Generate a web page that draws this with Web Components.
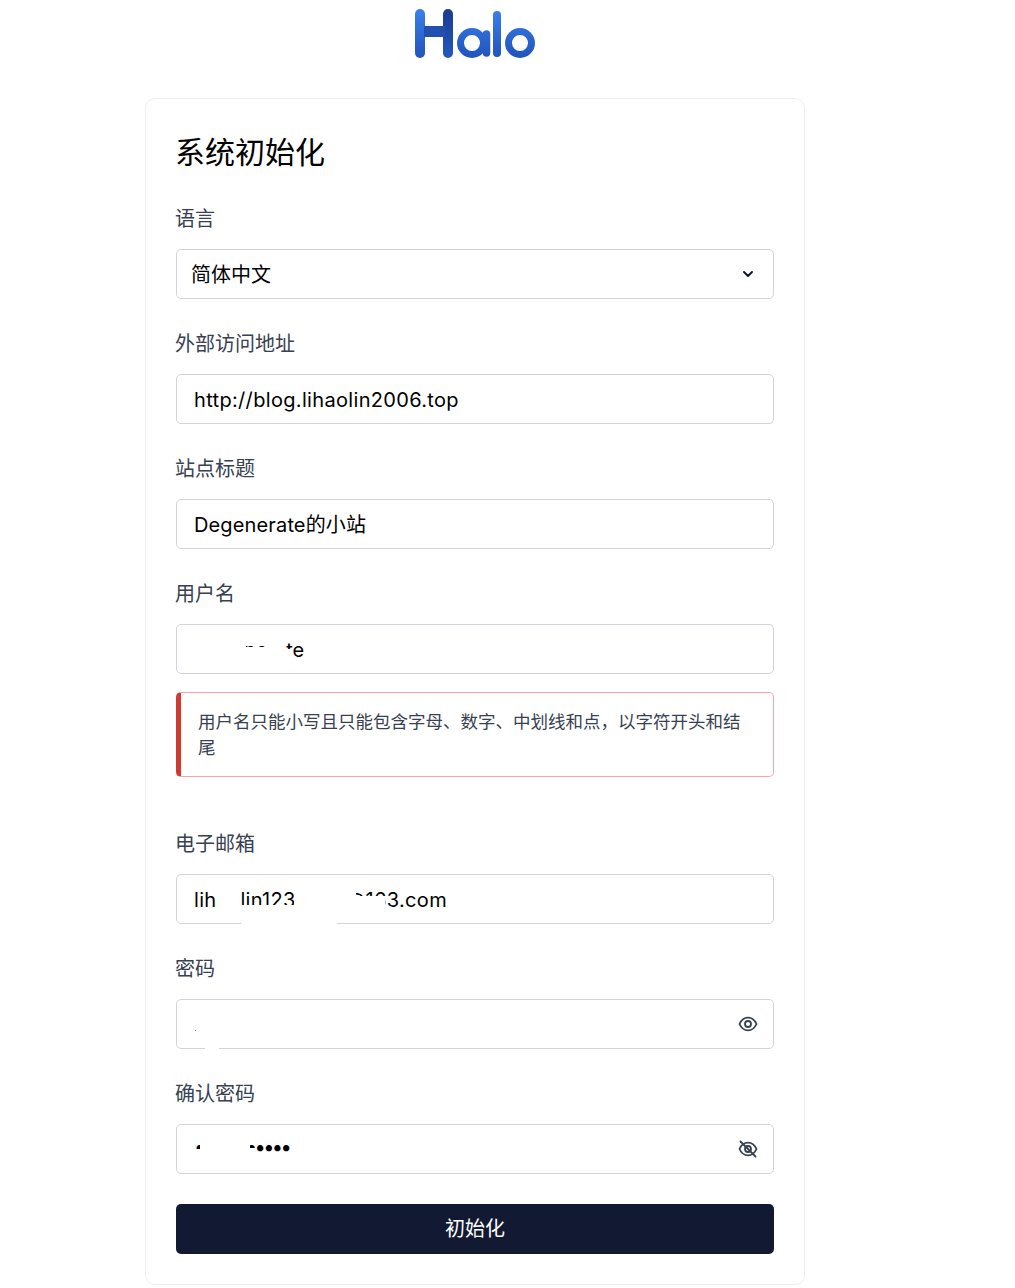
<!DOCTYPE html>
<html lang="zh"><head><meta charset="utf-8"><title>Halo</title>
<style>
html,body{margin:0;background:#fff}
body{font-family:Inter,"Noto Sans CJK SC",sans-serif;height:1288px;overflow:hidden}
</style></head><body>
<setup-page>
  <halo-logo slot="logo"></halo-logo>
  <setup-card heading="系统初始化">
    <form-field label="语言" value="简体中文" pad="14"><chevron-icon slot="suffix"></chevron-icon></form-field>
    <form-field label="外部访问地址" value="http://blog.lihaolin2006.top" spacing="0.33"></form-field>
    <form-field label="站点标题" value="Degenerate的小站" spacing="0.14"></form-field>
    <form-field label="用户名" value="Degenerate" mask="username" error="用户名只能小写且只能包含字母、数字、中划线和点，以字符开头和结尾"></form-field>
    <form-field label="电子邮箱" value="lihaolin1234567@163.com" spacing="0.33" mask="email"></form-field>
    <form-field label="密码" value="" mask="pw"><eye-icon slot="suffix"></eye-icon></form-field>
    <form-field label="确认密码" value="•••••••••••" spacing="-2.6" raise mask="pw2"><eye-icon slot="suffix" off></eye-icon></form-field>
    <submit-button>初始化</submit-button>
  </setup-card>
</setup-page>
<script>
function def(name, html){
  customElements.define(name, class extends HTMLElement{
    connectedCallback(){
      if(this.shadowRoot) return;
      const r=this.attachShadow({mode:'open'});
      r.innerHTML=typeof html==='function'?html(this):html;
    }
  });
}
def('setup-page',`<style>
:host{display:flex;flex-direction:column;align-items:center;width:950px;padding-top:9px;box-sizing:border-box}
.l{display:block;height:89px}
</style><div class="l"><slot name="logo"></slot></div><slot></slot>`);
def('halo-logo',`<style>:host{display:block;width:122px;height:50px}svg{display:block;margin-left:1px}</style>
<svg width="122" height="50" viewBox="0 0 122 50" fill="none">
<defs>
<linearGradient id="g" gradientUnits="userSpaceOnUse" x1="0" y1="0" x2="0" y2="50"><stop offset="0" stop-color="#3b80ec"/><stop offset="1" stop-color="#2152ba"/></linearGradient>
<linearGradient id="d" gradientUnits="userSpaceOnUse" x1="0" y1="0" x2="0" y2="50"><stop offset="0" stop-color="#1a3c94"/><stop offset="1" stop-color="#2558bc"/></linearGradient>
</defs>
<path d="M5 5V44" stroke="url(#g)" stroke-width="10" stroke-linecap="round"/>
<path d="M33 5V44" stroke="url(#d)" stroke-width="10" stroke-linecap="round"/>
<rect x="9" y="17" width="21" height="11" fill="#2150ae"/>
<circle cx="57" cy="34" r="11.500" stroke="url(#g)" stroke-width="7"/>
<path d="M71.500 25V44" stroke="url(#g)" stroke-width="7.500" stroke-linecap="round"/>
<path d="M82 6V44" stroke="url(#g)" stroke-width="8" stroke-linecap="round"/>
<circle cx="105" cy="34" r="11.500" stroke="url(#g)" stroke-width="7"/>
</svg>`);
def('setup-card',h=>`<style>
:host{display:block;width:660px;box-sizing:border-box;border:1px solid #eeeef2;border-radius:10px;background:#fff;padding:30px}
h1{margin:0 0 29px -1px;font-size:30px;line-height:46px;font-weight:400;color:#000}
.f{display:flex;flex-direction:column;gap:30px}
</style><h1>${h.getAttribute('heading')}</h1><div class="f"><slot></slot></div>`);
const masks={
 username:`<i style="left:14px;top:8px;width:55px;height:32px"></i><i style="left:69px;top:22px;width:40px;height:20px"></i><i style="left:89px;top:8px;width:20px;height:32px"></i><i style="left:107px;top:24px;width:9px;height:14px"></i>`,
 email:`<i style="left:39px;top:21px;width:24px;height:16px"></i><i style="left:62px;top:30px;width:100px;height:21px;border-radius:0 0 8px 8px"></i><i style="left:117px;top:10px;width:62px;height:30px"></i><i style="left:179px;top:21px;width:29px;height:18px"></i>`,
 pw:`<b></b><i style="left:28px;top:46px;width:14px;height:5px"></i>`,
 pw2:`<i style="left:23px;top:12px;width:50px;height:26px"></i><i style="left:19px;top:24px;width:6px;height:8px"></i><i style="left:73px;top:23px;width:6px;height:8px"></i>`
};
def('form-field',h=>{
 const err=h.getAttribute('error'), m=h.getAttribute('mask'), pad=h.getAttribute('pad')||17, sp=h.getAttribute('spacing')||0, val=h.getAttribute('value');
 const vp=h.hasAttribute('raise')?'padding-bottom:4px':'padding-top:2px';
 return `<style>
:host{display:block}
label{display:block;font-size:20px;line-height:30px;color:#374151;margin:0 0 15px -1px}
.box{position:relative;height:50px;box-sizing:border-box;border:1px solid #d1d5db;border-radius:5px;display:flex;align-items:center;padding:0 17px 0 ${pad}px;background:#fff}
.v{flex:1;font-size:20px;line-height:30px;min-height:30px;${vp};color:#000;white-space:nowrap;letter-spacing:${sp}px}
i{position:absolute;background:#fff;display:block}
b{position:absolute;left:18px;top:30px;width:1px;height:1px;background:#a98a6a}
.alert{margin:18px 0 22px;box-sizing:border-box;height:85px;border:1px solid #f6a6a6;border-left:5px solid #cf3a33;border-radius:5px;padding:16px 16px 0 17px;font-size:17.500px;line-height:26px;color:#374151}
</style><label>${h.getAttribute('label')}</label>
<div class="box"><div class="v">${val}</div><slot name="suffix"></slot>${masks[m]||''}</div>
${err?`<div class="alert">${err}</div>`:''}`;
});
def('chevron-icon',`<style>:host{display:block;width:20px;height:20px;margin-right:-2px}svg{display:block}</style>
<svg width="20" height="20" viewBox="0 0 20 20" fill="none" stroke="#111827" stroke-width="2" stroke-linecap="round" stroke-linejoin="round"><path d="M6 8l4 4 4-4"/></svg>`);
def('eye-icon',h=>`<style>:host{display:block;width:20px;height:20px;margin-right:-2px}svg{display:block}</style>
<svg width="20" height="20" viewBox="0 0 20 20" fill="none" stroke="#374151" stroke-width="1.800" stroke-linecap="round" stroke-linejoin="round">
<path d="M1.500 10C3.500 5.500 6.500 3.600 10 3.600S16.500 5.500 18.500 10C16.500 14.500 13.500 16.400 10 16.400S3.500 14.500 1.500 10Z"/><circle cx="10" cy="10" r="3"/>
${h.hasAttribute('off')?'<path d="M2.500 2.500L17.500 17.500"/>':''}</svg>`);
def('submit-button',`<style>
:host{display:block;height:50px;border-radius:5px;background:#121a33;color:#fff;font-size:20px;line-height:50px;text-align:center}
</style><slot></slot>`);
</script>
</body></html>
